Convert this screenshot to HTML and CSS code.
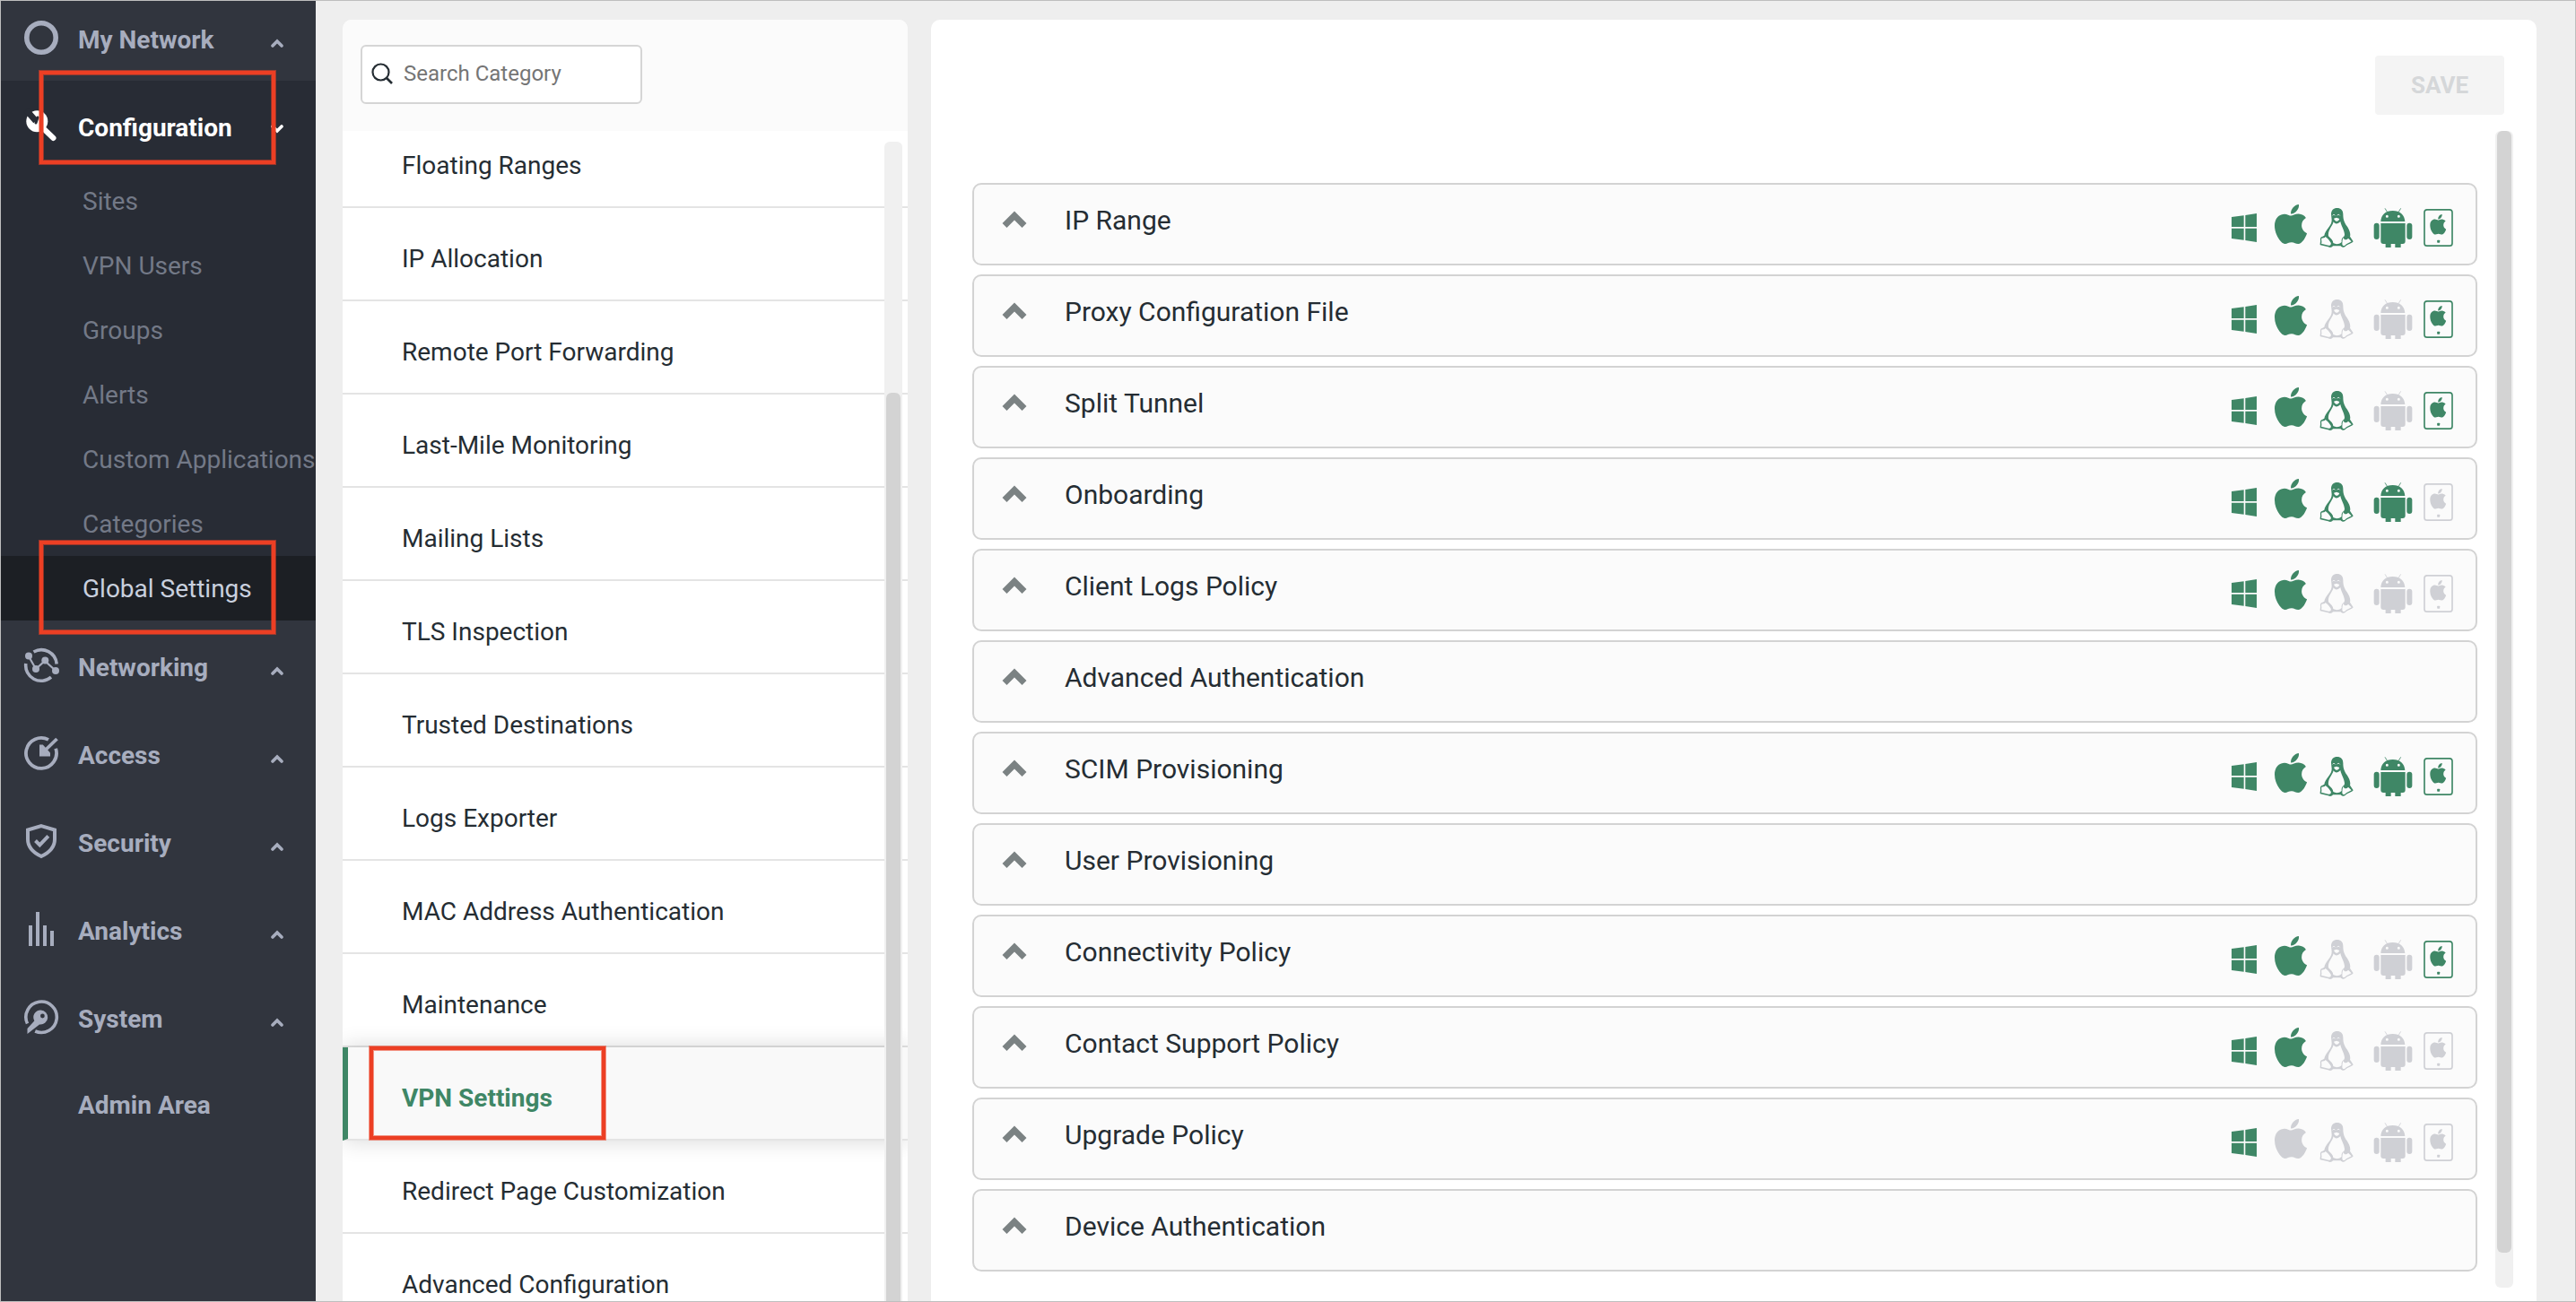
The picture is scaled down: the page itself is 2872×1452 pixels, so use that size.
FILE: index.html
```html
<!DOCTYPE html>
<html lang="en">
<head>
<meta charset="utf-8">
<title>Global Settings - VPN Settings</title>
<meta name="viewport" content="width=device-width, initial-scale=1">
<link rel="stylesheet" href="styles.css">
</head>
<body>
<svg class="sprite" aria-hidden="true">
  <symbol id="chev" viewBox="0 0 14 10"><path d="M2 8 7 3l5 5" fill="none" stroke="currentColor" stroke-width="3.600" stroke-linecap="round"/></symbol>
  <symbol id="arrow" viewBox="0 0 28 20"><path d="M3 16.500 14 5.500l11 11" fill="none" stroke="currentColor" stroke-width="7"/></symbol>
  <symbol id="windows" viewBox="0 0 84 96"><path fill="currentColor" d="M0 12 41 7v38H0zM46 6l38-6v45H46zM0 50h41v39L0 84zM46 50h38v46l-38-6z"/></symbol>
  <symbol id="apple" viewBox="4 32 376 448" preserveAspectRatio="none"><path fill="currentColor" d="M318.700 268.700c-.2-36.700 16.400-64.400 50-84.800-18.800-26.900-47.200-41.700-84.700-44.600-35.500-2.800-74.300 20.700-88.500 20.700-15 0-49.400-19.700-76.400-19.700C63.300 141.200 4 184.800 4 273.500q0 39.300 14.400 81.200c12.800 36.700 59 126.700 107.200 125.200 25.200-.6 43-17.900 75.800-17.900 31.800 0 48.300 17.900 76.400 17.900 48.600-.7 90.400-82.500 102.600-119.300-65.200-30.700-61.700-90-61.700-91.900zm-56.600-164.200c27.300-32.400 24.800-61.900 24-72.500-24.100 1.400-52 16.400-67.900 34.900-17.500 19.800-27.800 44.300-25.600 71.900 26.100 2 49.900-11.400 69.500-34.300z"/></symbol>
  <symbol id="linux" viewBox="0 0 112 132">
    <path fill="currentColor" d="M58 0c12 0 20 7 20 20 0 20 5 29 13 41s13 25 10 34l11 17c-4 7-20 9-27 17-5 4-11 3-15-2H44c-4 5-9 6-16 3L2 124c-3-3 1-10 0-16-1-7 1-11 6-12l7-4c1-9 8-18 14-26 8-10 11-16 11-26l-2-20C38 8 46 0 58 0z"/>
    <path fill="#fbfbfb" d="M46 46c5 9 15 8 23-1 2 14 12 25 14 43 0 4-1 7-4 9-5 3-7 9-6 17-9 8-20 8-28 3 0-8-8-15-16-23-3-20 12-30 17-48z"/>
    <path fill="#fbfbfb" d="M6 101c5-1 10 0 13-5 6 3 13 13 18 20 2 6-2 10-8 9L5 119c3-7-1-12 1-18zM79 99c2 8 10 10 16 2l11 11c-7 4-16 7-22 13-5 3-9 0-9-6 1-7 0-15 4-20zM47 35l9-3 10 4c-3 9-13 13-19-1z"/>
    <path fill="none" stroke="#fbfbfb" stroke-width="2.500" d="M43 25c2-4 6-4 8 0M58 25c2-4 7-4 9 0"/>
  </symbol>
  <symbol id="android" viewBox="0 0 130 132">
    <path fill="currentColor" fill-rule="evenodd" d="M24 45c1-22 16-36 40-36s40 14 41 36zM49.500 28a4.500 4.500 0 1 0-9 0 4.500 4.500 0 0 0 9 0zM88.500 28a4.500 4.500 0 1 0-9 0 4.500 4.500 0 0 0 9 0z"/>
    <path fill="none" stroke="currentColor" stroke-width="2.500" d="m38 1 8 13M91 1l-8 13"/>
    <path fill="currentColor" d="M24 51h82v60q0 9-9 9h-6v12H72v-12H58v12H40v-12h-7q-9 0-9-9z"/>
    <rect x="1" y="50" width="18" height="55" rx="9" fill="currentColor"/>
    <rect x="111" y="50" width="18" height="55" rx="9" fill="currentColor"/>
  </symbol>
  <symbol id="ipad" viewBox="0 0 98 126">
    <rect x="2.500" y="2.500" width="93" height="121" rx="9" fill="none" stroke="currentColor" stroke-width="5"/>
    <use href="#apple" x="21" y="18" width="54" height="68"/>
    <rect x="45" y="104" width="9" height="9" rx="2" fill="currentColor"/>
  </symbol>
</svg>

<div class="app">
  <aside class="sidebar">
    <nav class="nav">
      <a class="nav-row" href="#">
        <svg class="nav-icon" viewBox="0 0 40 40"><circle cx="20" cy="20" r="16.200" fill="none" stroke="currentColor" stroke-width="5.600"/></svg>
        <span class="nav-label">My Network</span><svg class="nav-chev"><use href="#chev"/></svg>
      </a>
      <div class="nav-group">
        <a class="nav-row nav-row-open" href="#">
          <svg class="nav-icon" viewBox="0 0 40 40"><circle cx="15.300" cy="15.300" r="12" fill="currentColor"/><path d="M3 2.500 14 15" stroke="#282c35" stroke-width="7" /><path d="m16 11-2 6" stroke="#282c35" stroke-width="3" stroke-linecap="round"/><path d="m20 21 13.500 13" stroke="currentColor" stroke-width="6" stroke-linecap="round"/></svg>
          <span class="nav-label">Configuration</span><svg class="nav-chev nav-chev-down"><use href="#chev"/></svg>
          <span class="mark"></span>
        </a>
        <a class="sub" href="#">Sites</a>
        <a class="sub" href="#">VPN Users</a>
        <a class="sub" href="#">Groups</a>
        <a class="sub" href="#">Alerts</a>
        <a class="sub" href="#">Custom Applications</a>
        <a class="sub" href="#">Categories</a>
        <a class="sub sub-active" href="#">Global Settings<span class="mark"></span></a>
      </div>
      <a class="nav-row" href="#">
        <svg class="nav-icon" viewBox="0 0 40 40"><g fill="none" stroke="currentColor"><path stroke-width="3.600" d="M11.500 5A17.200 17.200 0 0 1 37.200 18.500M2.800 18A17.200 17.200 0 0 0 31 33.200"/><path stroke-width="2.200" d="m6 10 8 14 10-9 12 11"/></g><g fill="currentColor"><circle cx="6" cy="9.500" r="4"/><circle cx="14" cy="24" r="4"/><circle cx="24.300" cy="14.500" r="4"/><circle cx="36" cy="26" r="4"/></g></svg>
        <span class="nav-label">Networking</span><svg class="nav-chev"><use href="#chev"/></svg>
      </a>
      <a class="nav-row" href="#">
        <svg class="nav-icon" viewBox="0 0 40 40"><g fill="none" stroke="currentColor" stroke-width="3.800"><path d="M28 4.900A17 17 0 1 0 36.200 14.800"/><path d="M37.500 4 23 18"/></g><path fill="currentColor" d="M18 10.500h3.800L30 19.500V23.500H18z"/></svg>
        <span class="nav-label">Access</span><svg class="nav-chev"><use href="#chev"/></svg>
      </a>
      <a class="nav-row" href="#">
        <svg class="nav-icon" viewBox="0 0 40 40"><g fill="none" stroke="currentColor" stroke-width="4"><path d="M20 3.200 35 7.500V18c0 9-6.500 15-15 19C11.500 33 5 27 5 18V7.500z"/><path d="m13.500 19.500 4.800 4.800 9.500-10"/></g></svg>
        <span class="nav-label">Security</span><svg class="nav-chev"><use href="#chev"/></svg>
      </a>
      <a class="nav-row" href="#">
        <svg class="nav-icon" viewBox="0 0 40 40"><path fill="currentColor" d="M6 16h4v23H6zM14 1h4v38h-4zM22 16h4v23h-4zM30 22h4v17h-4z"/></svg>
        <span class="nav-label">Analytics</span><svg class="nav-chev"><use href="#chev"/></svg>
      </a>
      <a class="nav-row" href="#">
        <svg class="nav-icon" viewBox="0 0 40 40"><path fill="none" stroke="currentColor" stroke-width="3.600" d="M4.500 27.500A17.200 17.200 0 1 1 13.200 36"/><path fill="currentColor" fill-rule="evenodd" d="M19.500 12.500a8 8 0 1 1-1.500 15.900L4.500 39v-6l7.800-8.600a8 8 0 0 1 7.200-11.900zM23.800 19a2.400 2.400 0 1 0-4.800 0 2.400 2.400 0 0 0 4.800 0z"/></svg>
        <span class="nav-label">System</span><svg class="nav-chev"><use href="#chev"/></svg>
      </a>
      <a class="nav-row nav-row-last" href="#"><span class="nav-icon"></span><span class="nav-label">Admin Area</span></a>
    </nav>
  </aside>

  <section class="categories">
    <div class="search">
      <svg class="search-icon" viewBox="0 0 24 24"><circle cx="10.500" cy="10.500" r="9" fill="none" stroke="currentColor" stroke-width="2.200"/><path d="m17 17 6 6" stroke="currentColor" stroke-width="2.600"/></svg>
      <input class="search-input" type="text" placeholder="Search Category" aria-label="Search Category">
    </div>
    <div class="cat-scroll">
      <ul class="cat-list">
        <li><a class="cat" href="#">Floating Ranges</a></li>
        <li><a class="cat" href="#">IP Allocation</a></li>
        <li><a class="cat" href="#">Remote Port Forwarding</a></li>
        <li><a class="cat" href="#">Last-Mile Monitoring</a></li>
        <li><a class="cat" href="#">Mailing Lists</a></li>
        <li><a class="cat" href="#">TLS Inspection</a></li>
        <li><a class="cat" href="#">Trusted Destinations</a></li>
        <li><a class="cat" href="#">Logs Exporter</a></li>
        <li><a class="cat" href="#">MAC Address Authentication</a></li>
        <li><a class="cat" href="#">Maintenance</a></li>
        <li><a class="cat cat-active" href="#">VPN Settings<span class="mark"></span></a></li>
        <li><a class="cat" href="#">Redirect Page Customization</a></li>
        <li><a class="cat" href="#">Advanced Configuration</a></li>
      </ul>
      <div class="track cat-track"><div class="thumb cat-thumb"></div></div>
    </div>
  </section>

  <main class="panel">
    <header class="panel-head"><button class="save" type="button" disabled>SAVE</button></header>
    <div class="panel-body">
      <div class="cards">
        <button class="card" type="button"><svg class="card-arrow"><use href="#arrow"/></svg><span class="card-title">IP Range</span>
          <span class="os"><svg class="i-win"><use href="#windows"/></svg><svg class="i-apple"><use href="#apple"/></svg><svg class="i-linux"><use href="#linux"/></svg><svg class="i-android"><use href="#android"/></svg><svg class="i-ipad"><use href="#ipad"/></svg></span></button>
        <button class="card" type="button"><svg class="card-arrow"><use href="#arrow"/></svg><span class="card-title">Proxy Configuration File</span>
          <span class="os"><svg class="i-win"><use href="#windows"/></svg><svg class="i-apple"><use href="#apple"/></svg><svg class="i-linux off"><use href="#linux"/></svg><svg class="i-android off"><use href="#android"/></svg><svg class="i-ipad"><use href="#ipad"/></svg></span></button>
        <button class="card" type="button"><svg class="card-arrow"><use href="#arrow"/></svg><span class="card-title">Split Tunnel</span>
          <span class="os"><svg class="i-win"><use href="#windows"/></svg><svg class="i-apple"><use href="#apple"/></svg><svg class="i-linux"><use href="#linux"/></svg><svg class="i-android off"><use href="#android"/></svg><svg class="i-ipad"><use href="#ipad"/></svg></span></button>
        <button class="card" type="button"><svg class="card-arrow"><use href="#arrow"/></svg><span class="card-title">Onboarding</span>
          <span class="os"><svg class="i-win"><use href="#windows"/></svg><svg class="i-apple"><use href="#apple"/></svg><svg class="i-linux"><use href="#linux"/></svg><svg class="i-android"><use href="#android"/></svg><svg class="i-ipad off"><use href="#ipad"/></svg></span></button>
        <button class="card" type="button"><svg class="card-arrow"><use href="#arrow"/></svg><span class="card-title">Client Logs Policy</span>
          <span class="os"><svg class="i-win"><use href="#windows"/></svg><svg class="i-apple"><use href="#apple"/></svg><svg class="i-linux off"><use href="#linux"/></svg><svg class="i-android off"><use href="#android"/></svg><svg class="i-ipad off"><use href="#ipad"/></svg></span></button>
        <button class="card" type="button"><svg class="card-arrow"><use href="#arrow"/></svg><span class="card-title">Advanced Authentication</span></button>
        <button class="card" type="button"><svg class="card-arrow"><use href="#arrow"/></svg><span class="card-title">SCIM Provisioning</span>
          <span class="os"><svg class="i-win"><use href="#windows"/></svg><svg class="i-apple"><use href="#apple"/></svg><svg class="i-linux"><use href="#linux"/></svg><svg class="i-android"><use href="#android"/></svg><svg class="i-ipad"><use href="#ipad"/></svg></span></button>
        <button class="card" type="button"><svg class="card-arrow"><use href="#arrow"/></svg><span class="card-title">User Provisioning</span></button>
        <button class="card" type="button"><svg class="card-arrow"><use href="#arrow"/></svg><span class="card-title">Connectivity Policy</span>
          <span class="os"><svg class="i-win"><use href="#windows"/></svg><svg class="i-apple"><use href="#apple"/></svg><svg class="i-linux off"><use href="#linux"/></svg><svg class="i-android off"><use href="#android"/></svg><svg class="i-ipad"><use href="#ipad"/></svg></span></button>
        <button class="card" type="button"><svg class="card-arrow"><use href="#arrow"/></svg><span class="card-title">Contact Support Policy</span>
          <span class="os"><svg class="i-win"><use href="#windows"/></svg><svg class="i-apple"><use href="#apple"/></svg><svg class="i-linux off"><use href="#linux"/></svg><svg class="i-android off"><use href="#android"/></svg><svg class="i-ipad off"><use href="#ipad"/></svg></span></button>
        <button class="card" type="button"><svg class="card-arrow"><use href="#arrow"/></svg><span class="card-title">Upgrade Policy</span>
          <span class="os"><svg class="i-win"><use href="#windows"/></svg><svg class="i-apple off"><use href="#apple"/></svg><svg class="i-linux off"><use href="#linux"/></svg><svg class="i-android off"><use href="#android"/></svg><svg class="i-ipad off"><use href="#ipad"/></svg></span></button>
        <button class="card" type="button"><svg class="card-arrow"><use href="#arrow"/></svg><span class="card-title">Device Authentication</span></button>
      </div>
      <div class="track"><div class="thumb panel-thumb"></div></div>
    </div>
  </main>
</div>
</body>
</html>
```
FILE: styles.css
```css
* { box-sizing: border-box; }

body {
  margin: 0;
  font-family: Roboto, "Liberation Sans", sans-serif;
  color: #252d33;
  background: #eeeeee;
}

a { color: inherit; text-decoration: none; }
svg { display: block; flex: none; }
.sprite { display: none; }

.app {
  display: flex;
  height: 100vh;
  overflow: hidden;
  border: 1px solid #bebebe;
}

/* Sidebar */
.sidebar {
  flex: 0 0 351px;
  overflow: hidden;
  background: #31353e;
  color: #a7adbe;
}
.nav { margin-top: -9px; }
.nav-row {
  position: relative;
  display: flex;
  align-items: center;
  height: 98px;
  padding: 2px 36px 0 25px;
  font-size: 28px;
  font-weight: 700;
  line-height: 36px;
}
.nav-row-last { height: 94px; }
.nav-icon { width: 40px; height: 40px; flex: none; }
.nav-label { flex: 1; padding-top: 6px; margin-left: 21px; white-space: nowrap; }
.nav-chev { width: 14px; height: 10px; margin-top: 12px; }
.nav-chev-down { margin-top: 8px; transform: rotate(180deg); }
.nav-group { background: #282c35; }
.nav-row-open { color: #ffffff; }
.sub {
  position: relative;
  display: flex;
  align-items: center;
  height: 72px;
  padding-left: 91px;
  font-size: 28px;
  white-space: nowrap;
  color: #737987;
}
.sub-active { background: #1c1f24; color: #c9d0de; }

/* Callout frames over the active items */
.mark {
  position: absolute;
  left: 43px;
  top: -11px;
  width: 263px;
  height: 104px;
  border: 4px solid #ec3f24;
  box-shadow: 0 0 0 1px rgba(236, 63, 36, .55), inset 0 0 0 1px rgba(236, 63, 36, .55);
}
.sub .mark { top: -17px; }
.cat .mark { left: 24px; top: -1px; }

/* Category list */
.categories {
  display: flex;
  flex-direction: column;
  flex: 0 0 630px;
  margin: 21px 0 0 30px;
  overflow: hidden;
  border-radius: 10px 10px 0 0;
  background: #ffffff;
}
.search {
  position: relative;
  z-index: 2;
  flex: none;
  height: 124px;
  padding: 28px 20px;
  background: #fbfbfb;
}
.search-icon {
  position: absolute;
  left: 32px;
  top: 48px;
  width: 24px;
  height: 24px;
}
.search-input {
  width: 314px;
  height: 66px;
  padding: 0 12px 2px 46px;
  border: 2px solid #d5d5d5;
  border-radius: 6px;
  background: #ffffff;
  font: 24px/32px Roboto, "Liberation Sans", sans-serif;
  color: inherit;
}
.search-input::placeholder { color: #757575; opacity: 1; }
.cat-scroll { position: relative; flex: 1; min-height: 0; overflow: hidden; }
.cat-list { margin: -18px 0 0; padding: 0; list-style: none; }
.cat {
  position: relative;
  display: flex;
  align-items: center;
  height: 104px;
  padding: 10px 0 0 66px;
  border-bottom: 2px solid #e4e4e4;
  font-size: 28px;
}
.cat-active {
  z-index: 1;
  padding-left: 60px;
  border-left: 6px solid #3f8766;
  background: #f9f9f9;
  box-shadow: 0 0 24px rgba(0, 0, 0, .16);
  font-weight: 700;
  color: #3f8766;
}

/* Scroll bars */
.track {
  width: 20px;
  padding: 0 2px;
  border-radius: 6px;
  background: #f0f0f0;
}
.thumb { border-radius: 6px; background: #d3d3d3; }
.cat-track {
  position: absolute;
  z-index: 2;
  top: 12px;
  right: 6px;
  bottom: -6px;
  padding-top: 280px;
}
.cat-thumb { height: 100%; }
.panel-thumb { height: 97%; }

/* Settings panel */
.panel {
  display: flex;
  flex-direction: column;
  flex: 1;
  min-width: 0;
  margin: 21px 43px 0 26px;
  border-radius: 10px 10px 0 0;
  background: #ffffff;
}
.panel-head {
  display: flex;
  justify-content: flex-end;
  flex: none;
  height: 124px;
  padding: 40px 36px 0 0;
}
.save {
  width: 144px;
  height: 66px;
  padding: 0;
  border: 0;
  border-radius: 4px;
  background: #f4f4f4;
  font: 700 26px/32px Roboto, "Liberation Sans", sans-serif;
  color: #d5d7d9;
}
.panel-body {
  display: flex;
  flex: 1;
  gap: 20px;
  min-height: 0;
  padding: 0 26px 15px 46px;
}
.cards {
  display: flex;
  flex-direction: column;
  flex: 1;
  gap: 10px;
  padding-top: 58px;
}
.card {
  display: flex;
  align-items: center;
  flex: none;
  width: 100%;
  height: 92px;
  padding: 0 25px 0 31px;
  border: 2px solid #d3d3d3;
  border-radius: 10px;
  background: #fbfbfb;
  font: 30px/40px Roboto, "Liberation Sans", sans-serif;
  color: inherit;
  text-align: left;
}
.card-arrow { width: 28px; height: 20px; margin-bottom: 10px; color: #7b8283; }
.card-title { flex: 1; margin-left: 42px; padding-bottom: 8px; }
.os {
  display: flex;
  align-items: center;
  height: 48px;
  padding-top: 8px;
  color: #3f8766;
}
.off { color: #cfd0d5; }
.i-win { width: 28px; height: 32px; margin-right: 20px; }
.i-apple { width: 36px; height: 44px; margin: 0 14px 8px 0; }
.i-linux { width: 38px; height: 44px; margin-right: 22px; }
.i-android { width: 44px; height: 44px; margin-right: 12px; }
.i-ipad { width: 33px; height: 42px; }
```
